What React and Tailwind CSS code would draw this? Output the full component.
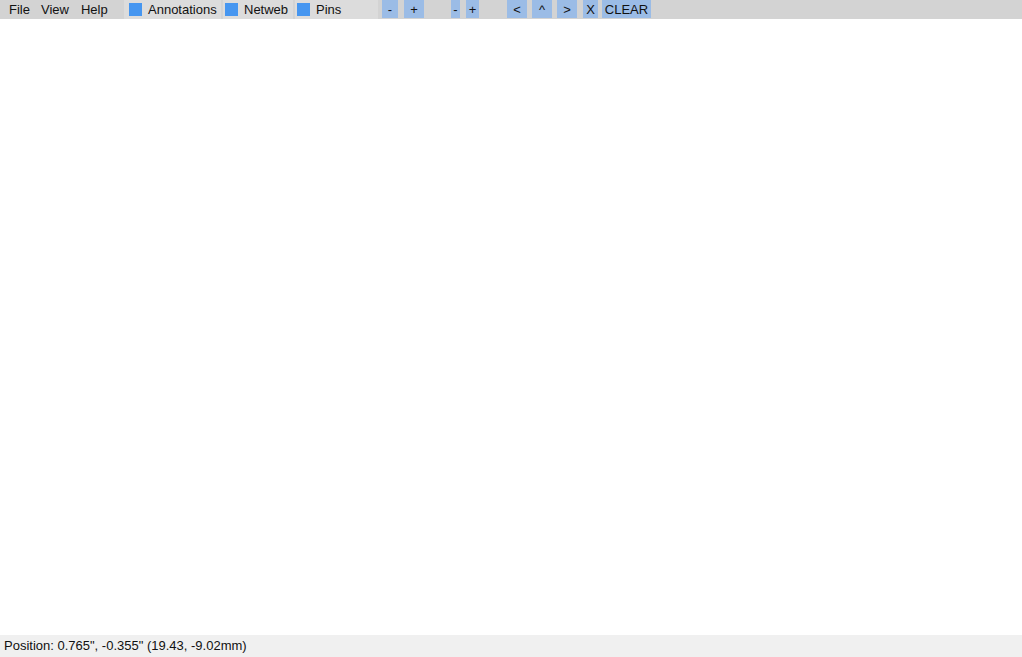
import React, { useState } from 'react';

function Toggle({ label, checked, onChange, className }) {
  return (
    <label className={'flex h-full items-center bg-[#dcdcdc] cursor-pointer ' + className}>
      <span
        onClick={onChange}
        className={'w-[13px] h-[13px] shrink-0 ' + (checked ? 'bg-[#4696f0]' : 'bg-white border border-[#888]')}
      />
      <span className="ml-[6px]">{label}</span>
    </label>
  );
}

function Btn({ children, className }) {
  return (
    <button className={'h-[18px] self-start flex items-center justify-center bg-[#9bbce6] leading-none ' + className}>
      {children}
    </button>
  );
}

export default function App() {
  const [layers, setLayers] = useState({ Annotations: true, Netweb: true, Pins: true });
  const flip = k => setLayers({ ...layers, [k]: !layers[k] });

  return (
    <div className="w-[1022px] h-[657px] flex flex-col bg-white text-[13px] text-[#111] font-['Liberation_Sans',Arial,sans-serif]">
      <div className="h-[19px] shrink-0 flex items-center bg-[#d3d3d3]">
        <div className="flex h-full w-[124px] shrink-0 items-center pl-[9px]">
          <span className="cursor-default">File</span>
          <span className="ml-[11px] cursor-default">View</span>
          <span className="ml-[12px] cursor-default">Help</span>
        </div>
        <Toggle label="Annotations" checked={layers.Annotations} onChange={() => flip('Annotations')} className="pl-[5px] w-[97px]" />
        <Toggle label="Netweb" checked={layers.Netweb} onChange={() => flip('Netweb')} className="ml-[2px] pl-[2px] w-[70px]" />
        <Toggle label="Pins" checked={layers.Pins} onChange={() => flip('Pins')} className="ml-[2px] pl-[2px] w-[83px]" />

        <Btn className="ml-[4px] w-[16px]">-</Btn>
        <Btn className="ml-[6px] w-[20px]">+</Btn>
        <Btn className="ml-[27px] w-[9px]">-</Btn>
        <Btn className="ml-[6px] w-[13px]">+</Btn>
        <Btn className="ml-[28px] w-[20px]">&lt;</Btn>
        <Btn className="ml-[5px] w-[20px]">^</Btn>
        <Btn className="ml-[5px] w-[20px]">&gt;</Btn>
        <Btn className="ml-[6px] w-[15px]">X</Btn>
        <Btn className="ml-[4px] w-[49px]">CLEAR</Btn>
      </div>

      <div className="flex-1 bg-white" />

      <div className="h-[22px] shrink-0 flex items-center bg-[#f0f0f0] px-[4px]">
        Position: 0.765", -0.355" (19.43, -9.02mm)
      </div>
    </div>
  );
}
